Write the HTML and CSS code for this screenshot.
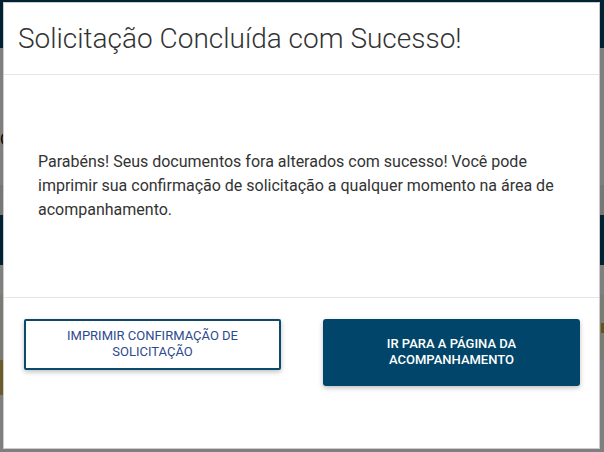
FILE: index.html
```html
<!DOCTYPE html>
<html lang="pt-BR">
<head>
    <meta charset="UTF-8">
    <meta name="viewport" content="width=device-width, initial-scale=1.0">
    <title>Solicitação Concluída</title>
    <link rel="stylesheet" href="styles.css">
</head>
<body>
    <div class="page">
        <header class="topbar"></header>
        <section class="intro">
            <h1>Documentos</h1>
            <p>Consulte sua solicitação</p>
        </section>
        <div class="strip"></div>
        <div class="band"></div>
        <div class="spacer"></div>
        <div class="notice">
            <span class="notice-mark"></span>
        </div>
        <div class="alert"></div>
        <div class="rest"></div>
    </div>

    <div class="overlay"></div>

    <div class="modal">
        <div class="modal-header">
            <h2>Solicitação Concluída com Sucesso!</h2>
        </div>
        <div class="modal-body">
            <p>Parabéns! Seus documentos fora alterados com sucesso! Você pode imprimir sua confirmação de solicitação a qualquer momento na área de acompanhamento.</p>
        </div>
        <div class="modal-footer">
            <button class="btn btn-outline">Imprimir confirmação de solicitação</button>
            <button class="btn btn-primary">Ir para a página da acompanhamento</button>
        </div>
    </div>
</body>
</html>
```

FILE: styles.css
```css
body {
    margin: 0;
    font-family: Roboto, "Liberation Sans", Arial, sans-serif;
    background-color: #ffffff;
    overflow: hidden;
}
.page {
    height: 452px;
}
.topbar {
    height: 48px;
    background-color: #004466;
}
.intro {
    height: 137px;
    background-color: #ffffff;
    overflow: hidden;
}
.intro h1 {
    margin: 30px 0 0 0;
    font-size: 44px;
    font-weight: 400;
    color: #222;
}
.intro p {
    margin: 0;
    font-size: 16px;
}
.strip {
    height: 30px;
    background-color: #eeeeee;
}
.band {
    height: 50px;
    background-color: #004466;
}
.spacer {
    height: 30px;
    background-color: #ffffff;
}
.notice {
    height: 65px;
    background-color: #f4f8e6;
    display: flex;
    justify-content: flex-end;
    align-items: center;
}
.notice-mark {
    width: 3px;
    height: 10px;
    background-color: #c8a440;
}
.alert {
    height: 35px;
    border-left: 3px solid #d8b656;
    background-color: #ffffff;
}
.rest {
    height: 57px;
    background-color: #ffffff;
}
.overlay {
    position: fixed;
    inset: 0;
    background-color: rgba(0, 0, 0, 0.5);
}
.modal {
    position: absolute;
    top: 2px;
    left: 3px;
    width: 597px;
    box-sizing: border-box;
    background-color: #ffffff;
    border: 1px solid rgba(0, 0, 0, 0.2);
}
.modal-header {
    padding: 18px 14px;
    border-bottom: 1px solid #e5e5e5;
}
.modal-header h2 {
    margin: 0;
    font-size: 28px;
    font-weight: 300;
    line-height: 35px;
    color: #333;
}
.modal-body {
    padding: 75px 34px;
    border-bottom: 1px solid #e5e5e5;
}
.modal-body p {
    margin: 0;
    font-size: 16px;
    line-height: 24px;
    color: #333;
}
.modal-footer {
    display: flex;
    justify-content: space-between;
    align-items: flex-start;
    padding: 21px 19px 62px 20px;
}
.btn {
    width: 257px;
    font-family: Roboto, "Liberation Sans", Arial, sans-serif;
    font-size: 13px;
    line-height: 16px;
    text-transform: uppercase;
    padding-left: 20px;
    padding-right: 20px;
    cursor: pointer;
    box-shadow: 0 2px 5px rgba(0, 0, 0, 0.25);
}
.btn-outline {
    padding-top: 7px;
    padding-bottom: 8px;
    background-color: #ffffff;
    color: #2e4a8f;
    border: 2px solid #0b4a6b;
    border-radius: 2px;
}
.btn-primary {
    padding-top: 17px;
    padding-bottom: 18px;
    background-color: #01466a;
    color: #ffffff;
    font-weight: 500;
    border: none;
    border-radius: 3px;
}
```
